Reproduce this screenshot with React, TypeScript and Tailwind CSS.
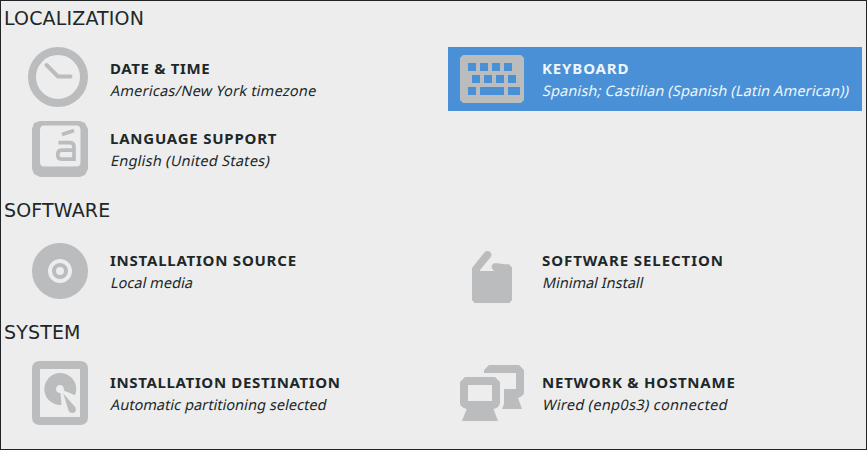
import type { ReactNode } from 'react';

const Icon = ({ children }: { children: ReactNode }) => (
  <svg className="h-16 w-16 shrink-0 fill-current text-[#babcbe]" viewBox="0 0 64 64">
    {children}
  </svg>
);

const ClockIcon = () => (
  <Icon>
    <circle cx="30" cy="30" r="26" fill="none" stroke="currentColor" strokeWidth="8" />
    <path d="M18.5 18L30 29.5H42.5" fill="none" stroke="currentColor" strokeWidth="4" strokeLinecap="round" strokeLinejoin="round" />
  </Icon>
);

const LanguageIcon = () => (
  <Icon>
    <path
      fillRule="evenodd"
      d="M12 4H52L57 6L60 12V52L57 58L52 60H12L6 57L4 52V12L6 6ZM16 8.5Q12 8.5 12 13V45Q12 49.5 16 49.5H48.5Q52.5 49.5 52.5 45V13Q52.5 8.5 48.5 8.5Z"
    />
    <path d="M34 17.5L46 13.5" fill="none" stroke="currentColor" strokeWidth="3.5" />
    <path d="M30.5 25.7H42Q46 25.7 46 30V42.2H33.5Q29.7 42.2 29.7 37.8T33.5 33.2H46" fill="none" stroke="currentColor" strokeWidth="3.7" />
  </Icon>
);

const DiscIcon = () => (
  <Icon>
    <circle cx="32" cy="32" r="20" fill="none" stroke="currentColor" strokeWidth="16" />
    <circle cx="32" cy="32" r="6" fill="none" stroke="currentColor" strokeWidth="4" />
  </Icon>
);

const DriveIcon = () => (
  <Icon>
    <path fillRule="evenodd" d="M12 0H52Q60 0 60 8V56Q60 64 52 64H12Q4 64 4 56V8Q4 0 12 0ZM12 8V56H52V8Z" />
    <path d="M33.5 44A16 16 0 1 1 47 34.3L35.7 29.5A4 4 0 1 0 32.5 32Z" />
    <path d="M35.3 32.5L47.5 46.5Q49 52 44 52Q41.5 52 40.5 49.5Z" />
  </Icon>
);

const PackageIcon = () => (
  <Icon>
    <path d="M12 29L24.5 13.3Q27 11 30 12.7Q32.5 15 30.8 18L20 31V32H34L31.7 29V26.5L33.8 24.2H38L44 25.3H49L52 28.5V61L49.5 64H14.5L12 61Z" />
  </Icon>
);

const NetworkIcon = () => (
  <Icon>
    <path fillRule="evenodd" d="M5 16H35L40 21V42Q39 47 33.5 48L38 60H2L6.7 48Q0 46 0 42V21ZM8 24V40H32V24Z" />
    <path d="M24 12V9L29 4H59L64 9V32Q63 35 58 37L62 48H42L44 43V28H56V12Z" />
  </Icon>
);

const KeyboardIcon = () => (
  <Icon>
    <path
      fillRule="evenodd"
      d="M3 8H61L64 11V53L61 56H3L0 53V11ZM8 16v8h8v-8zM20 16v8h8v-8zM32 16v8h8v-8zM44 16v8h8v-8zM12 28v8h8v-8zM24 28v8h8v-8zM36 28v8h8v-8zM48 28v8h8v-8zM8 40v8h8v-8zM20 40v8h24v-8zM48 40v8h12v-8z"
    />
  </Icon>
);

type SpokeProps = {
  icon: ReactNode;
  title: string;
  status: string;
  titleClass: string;
  statusClass: string;
  selected?: boolean;
};

const Spoke = ({ icon, title, status, titleClass, statusClass, selected }: SpokeProps) => (
  <div className={`flex h-16 gap-[18px] pl-3 whitespace-nowrap ${selected ? 'bg-[#4a90d6] text-[#eef6fb]' : ''}`}>
    {icon}
    <div className="flex flex-col items-start pt-2.5">
      <span className={`text-[15px] leading-[22px] font-bold ${titleClass}`}>{title}</span>
      <span className={`-ml-px origin-bottom-left -skew-x-12 text-[14.5px] leading-[22px] ${statusClass}`}>{status}</span>
    </div>
  </div>
);

const Section = ({ name, children }: { name: string; children: ReactNode }) => (
  <section>
    <h2 className="h-[22px] pl-[3px] font-['DejaVu_Sans',sans-serif] text-[19px] leading-[22px] tracking-[0.15px]">{name}</h2>
    <div className="mt-[18px] grid grid-cols-[414px_414px] gap-x-[18px] gap-y-1.5 pl-[15px]">{children}</div>
  </section>
);

export default function App() {
  return (
    <main className="flex h-[450px] w-[867px] flex-col gap-[18px] overflow-hidden border border-[#202426] bg-[#ededed] pt-[6px] font-['Noto_Sans',sans-serif] text-[#202728]">
      <Section name="LOCALIZATION">
        <Spoke icon={<ClockIcon />} title="DATE & TIME" status="Americas/New York timezone" titleClass="tracking-[0.65px]" statusClass="tracking-[0.24px]" />
        <Spoke icon={<KeyboardIcon />} title="KEYBOARD" status="Spanish; Castilian (Spanish (Latin American))" titleClass="tracking-[0.85px]" statusClass="tracking-[0.14px]" selected />
        <Spoke icon={<LanguageIcon />} title="LANGUAGE SUPPORT" status="English (United States)" titleClass="tracking-[0.77px]" statusClass="tracking-[0.27px]" />
      </Section>
      <Section name="SOFTWARE">
        <Spoke icon={<DiscIcon />} title="INSTALLATION SOURCE" status="Local media" titleClass="tracking-[0.77px]" statusClass="tracking-[0.05px]" />
        <Spoke icon={<PackageIcon />} title="SOFTWARE SELECTION" status="Minimal Install" titleClass="tracking-[0.93px]" statusClass="" />
      </Section>
      <Section name="SYSTEM">
        <Spoke icon={<DriveIcon />} title="INSTALLATION DESTINATION" status="Automatic partitioning selected" titleClass="tracking-[0.65px]" statusClass="tracking-[0.05px]" />
        <Spoke icon={<NetworkIcon />} title="NETWORK & HOSTNAME" status="Wired (enp0s3) connected" titleClass="tracking-[0.77px]" statusClass="tracking-[0.33px]" />
      </Section>
    </main>
  );
}
